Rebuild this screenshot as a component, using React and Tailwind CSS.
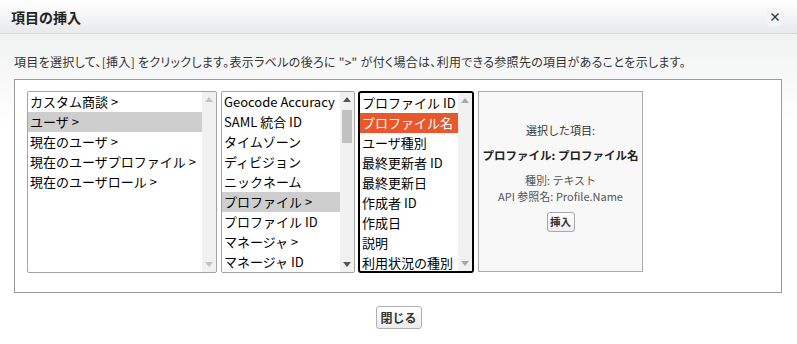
import React from 'react';

const font = { fontFamily: '"Noto Sans CJK JP", "Noto Sans", sans-serif' };

const Arrow = ({ up, color }) => (
    <svg width="8" height="5" viewBox="0 0 8 5" className="block">
        {up ? <polygon points="0,5 8,5 4,0" fill={color} /> : <polygon points="0,0 8,0 4,5" fill={color} />}
    </svg>
);

const Scrollbar = ({ arrow, thumb }) => (
    <div className="relative w-[14px] h-full bg-[#f1f1f1] flex flex-col items-center justify-between py-[5px] shrink-0">
        <Arrow up color={arrow} />
        {thumb && <div className="absolute left-[2px] right-[2px] top-[18px] h-[33px] bg-[#c1c1c1]" />}
        <Arrow color={arrow} />
    </div>
);

const ListBox = ({ items, selected, selClass, className, arrow, thumb }) => (
    <div className={`flex bg-white overflow-hidden ${className}`}>
        <div className="flex-1 min-w-0">
            {items.map((it, i) => (
                <div
                    key={i}
                    className={`h-[20px] leading-[20px] text-[13px] pl-[2px] whitespace-nowrap overflow-hidden ${i === selected ? selClass : 'text-black'}`}
                >
                    {it}
                </div>
            ))}
        </div>
        <Scrollbar arrow={arrow} thumb={thumb} />
    </div>
);

export default function App() {
    return (
        <div className="w-[797px] h-[344px] bg-white text-[#333] overflow-hidden" style={font}>
            {/* ヘッダー */}
            <div className="h-[34px] bg-linear-to-b from-white to-[#e8eaeb] border-b border-[#d7d9da] flex items-center justify-between pl-[11px] pr-[14px]">
                <h1 className="text-[14px] font-bold text-[#222] leading-none">項目の挿入</h1>
                <button className="w-[16px] h-[18px] bg-[#f4f4f4] rounded-[2px] text-[12px] font-bold text-[#333] flex items-center justify-center leading-none">×</button>
            </div>

            <div className="bg-linear-to-b from-[#f1f2f2] to-white to-[30%] pt-[20px]">
                <p className="text-[12px] leading-[16px] pl-[14px] text-[#333] tracking-[0.3px] [font-feature-settings:'palt']">
                    項目を選択して、[挿入] をクリックします。表示ラベルの後ろに "&gt;" が付く場合は、利用できる参照先の項目があることを示します。
                </p>

                <div className="ml-[14px] mt-[9px] w-[768px] h-[214px] border border-[#9a9a9a] bg-white pl-[12px] pt-[11px] flex items-start">
                    <ListBox
                        className="w-[190px] h-[182px] border border-[#a3a3a3] rounded-[2px]"
                        items={['カスタム商談 >', 'ユーザ >', '現在のユーザ >', '現在のユーザプロファイル >', '現在のユーザロール >']}
                        selected={1}
                        selClass="bg-[#cecece] text-black"
                        arrow="#c4c4c4"
                    />
                    <ListBox
                        className="ml-[4px] w-[134px] h-[182px] border border-[#a3a3a3] rounded-[2px]"
                        items={['Geocode Accuracy', 'SAML 統合 ID', 'タイムゾーン', 'ディビジョン', 'ニックネーム', 'プロファイル >', 'プロファイル ID', 'マネージャ >', 'マネージャ ID']}
                        selected={5}
                        selClass="bg-[#cecece] text-black"
                        arrow="#555"
                        thumb
                    />
                    <ListBox
                        className="ml-[3px] w-[116px] h-[182px] border-2 border-black rounded-[3px]"
                        items={['プロファイル ID', 'プロファイル名', 'ユーザ種別', '最終更新者 ID', '最終更新日', '作成者 ID', '作成日', '説明', '利用状況の種別']}
                        selected={1}
                        selClass="bg-[#e8582b] text-white"
                        arrow="#a8a8a8"
                    />

                    {/* 選択した項目 */}
                    <div className="ml-[4px] w-[165px] h-[181px] border border-[#ababab] bg-[#f8f8f8] flex flex-col items-center pt-[30px]">
                        <p className="text-[11px] leading-[16px] text-[#333]">選択した項目:</p>
                        <p className="mt-[9px] text-[11.5px] leading-[16px] font-bold text-[#222]">プロファイル: プロファイル名</p>
                        <p className="mt-[10px] text-[11px] leading-[14px] text-[#555]">種別: テキスト</p>
                        <p className="mt-[2px] text-[11px] leading-[14px] text-[#555]">API 参照名: Profile.Name</p>
                        <button className="mt-[9px] w-[28px] h-[20px] border border-[#a8a8a8] rounded-[3px] bg-linear-to-b from-white to-[#ededed] text-[10.5px] font-bold text-[#333] leading-none">
                            挿入
                        </button>
                    </div>
                </div>

                <div className="flex justify-center pt-[13px] pb-[16px]">
                    <button className="w-[46px] h-[23px] border border-[#b0b0b0] rounded-[3px] bg-linear-to-b from-white to-[#ececec] text-[12px] font-bold text-[#333] leading-none">
                        閉じる
                    </button>
                </div>
            </div>
        </div>
    );
}
